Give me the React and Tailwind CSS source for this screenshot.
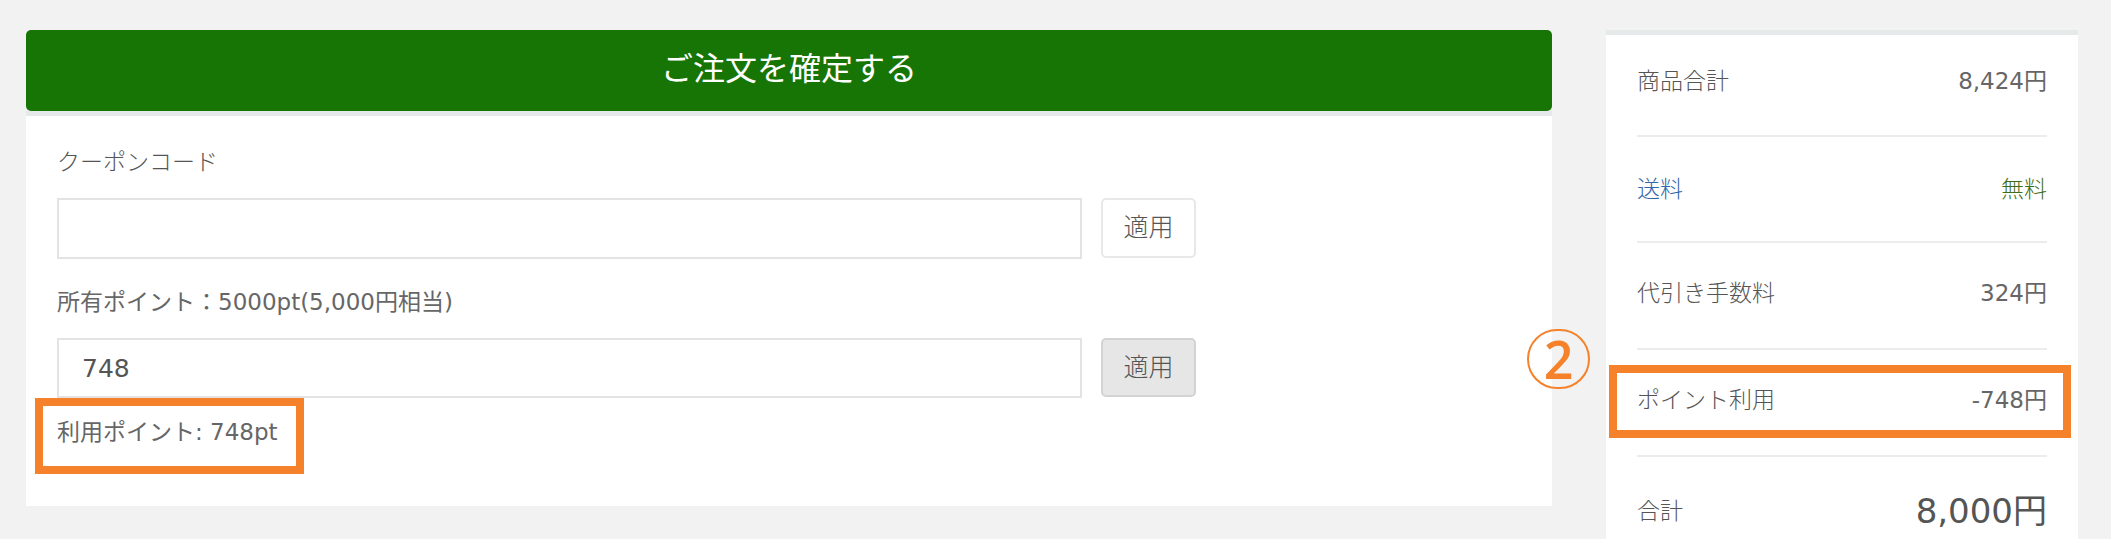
import React from "react";

const font = {
  fontFamily: '"DejaVu Sans", "Noto Sans CJK JP", sans-serif',
};

const Row = ({ label, value, labelClass = "text-[#555]", valueClass = "text-[#666]", className = "" }) => (
  <div className={"flex justify-between items-center border-b-2 border-[#ececec] " + className}>
    <span className={"text-[23px] leading-[34px] font-light " + labelClass}>{label}</span>
    <span className={"text-[23px] leading-[34px] " + valueClass}>{value}</span>
  </div>
);

const App = () => {
  return (
    <div
      style={font}
      className="relative w-[2111px] h-[539px] overflow-hidden bg-[#f2f2f2]"
    >
      <div className="flex items-start gap-[54px] pt-[30px] pl-[26px]">
        {/* left: confirm + coupon / points */}
        <div className="w-[1526px]">
          <button className="w-full h-[81px] rounded-[5px] bg-[#177506] text-white text-[32px] flex items-center justify-center pb-[4px]">
            ご注文を確定する
          </button>
          <div className="h-[5px] bg-[#e5e9e9]"></div>
          <div className="h-[390px] bg-white pl-[31px] pt-[29px]">
            <p className="text-[23px] leading-[34px] text-[#555] font-light">クーポンコード</p>
            <div className="flex items-start gap-[19px] mt-[19px]">
              <input
                className="w-[1025px] h-[61px] border-2 border-[#e3e3e3] bg-white outline-none"
                style={font}
              />
              <button className="w-[95px] h-[60px] rounded-[5px] border-2 border-[#e8e8e8] bg-white text-[25px] text-[#555] font-light">
                適用
              </button>
            </div>
            <p className="mt-[26px] text-[23px] leading-[34px] text-[#666]">
              所有ポイント：5000pt(5,000円相当)
            </p>
            <div className="flex items-start gap-[19px] mt-[19px]">
              <input
                defaultValue="748"
                className="w-[1025px] h-[60px] border-2 border-[#e3e3e3] bg-white pl-[23px] text-[25px] text-[#555] outline-none"
                style={font}
              />
              <button className="w-[95px] h-[59px] rounded-[5px] border-2 border-[#d3d3d3] bg-[#e6e6e6] text-[25px] text-[#555] font-light">
                適用
              </button>
            </div>
            <p className="mt-[17px] text-[23px] leading-[34px] text-[#666]">利用ポイント: 748pt</p>
          </div>
        </div>

        {/* right: summary */}
        <div className="w-[472px] h-[509px] bg-white border-t-[5px] border-[#e5e9e9] px-[31px]">
          <Row label="商品合計" value="8,424円" className="pt-[29px] pb-[37px]" />
          <Row
            label="送料"
            value="無料"
            labelClass="text-[#2f66a8]"
            valueClass="text-[#3f6e1a] font-light"
            className="pt-[35px] pb-[35px]"
          />
          <Row label="代引き手数料" value="324円" className="pt-[33px] pb-[38px]" />
          <Row label="ポイント利用" value="-748円" className="pt-[33px] pb-[38px]" />
          <div className="flex justify-between items-center pt-[34px]">
            <span className="text-[23px] leading-[34px] text-[#555] font-light">合計</span>
            <span className="text-[34px] leading-[40px] text-[#555]">8,000円</span>
          </div>
        </div>
      </div>

      {/* annotations */}
      <div className="absolute left-[35px] top-[398px] w-[269px] h-[76px] border-[8px] border-[#f5822a]"></div>
      <div className="absolute left-[1609px] top-[365px] w-[462px] h-[73px] border-[8px] border-[#f5822a]"></div>
      <div className="absolute left-[1527px] top-[329px] w-[63px] h-[60px] rounded-full border-2 border-[#f5822a] flex items-center justify-center">
        <span
          className="text-[#f5822a] text-[52px] leading-none font-semibold"
          style={{ fontFamily: '"Open Sans", sans-serif' }}
        >
          2
        </span>
      </div>
    </div>
  );
};

export default App;
